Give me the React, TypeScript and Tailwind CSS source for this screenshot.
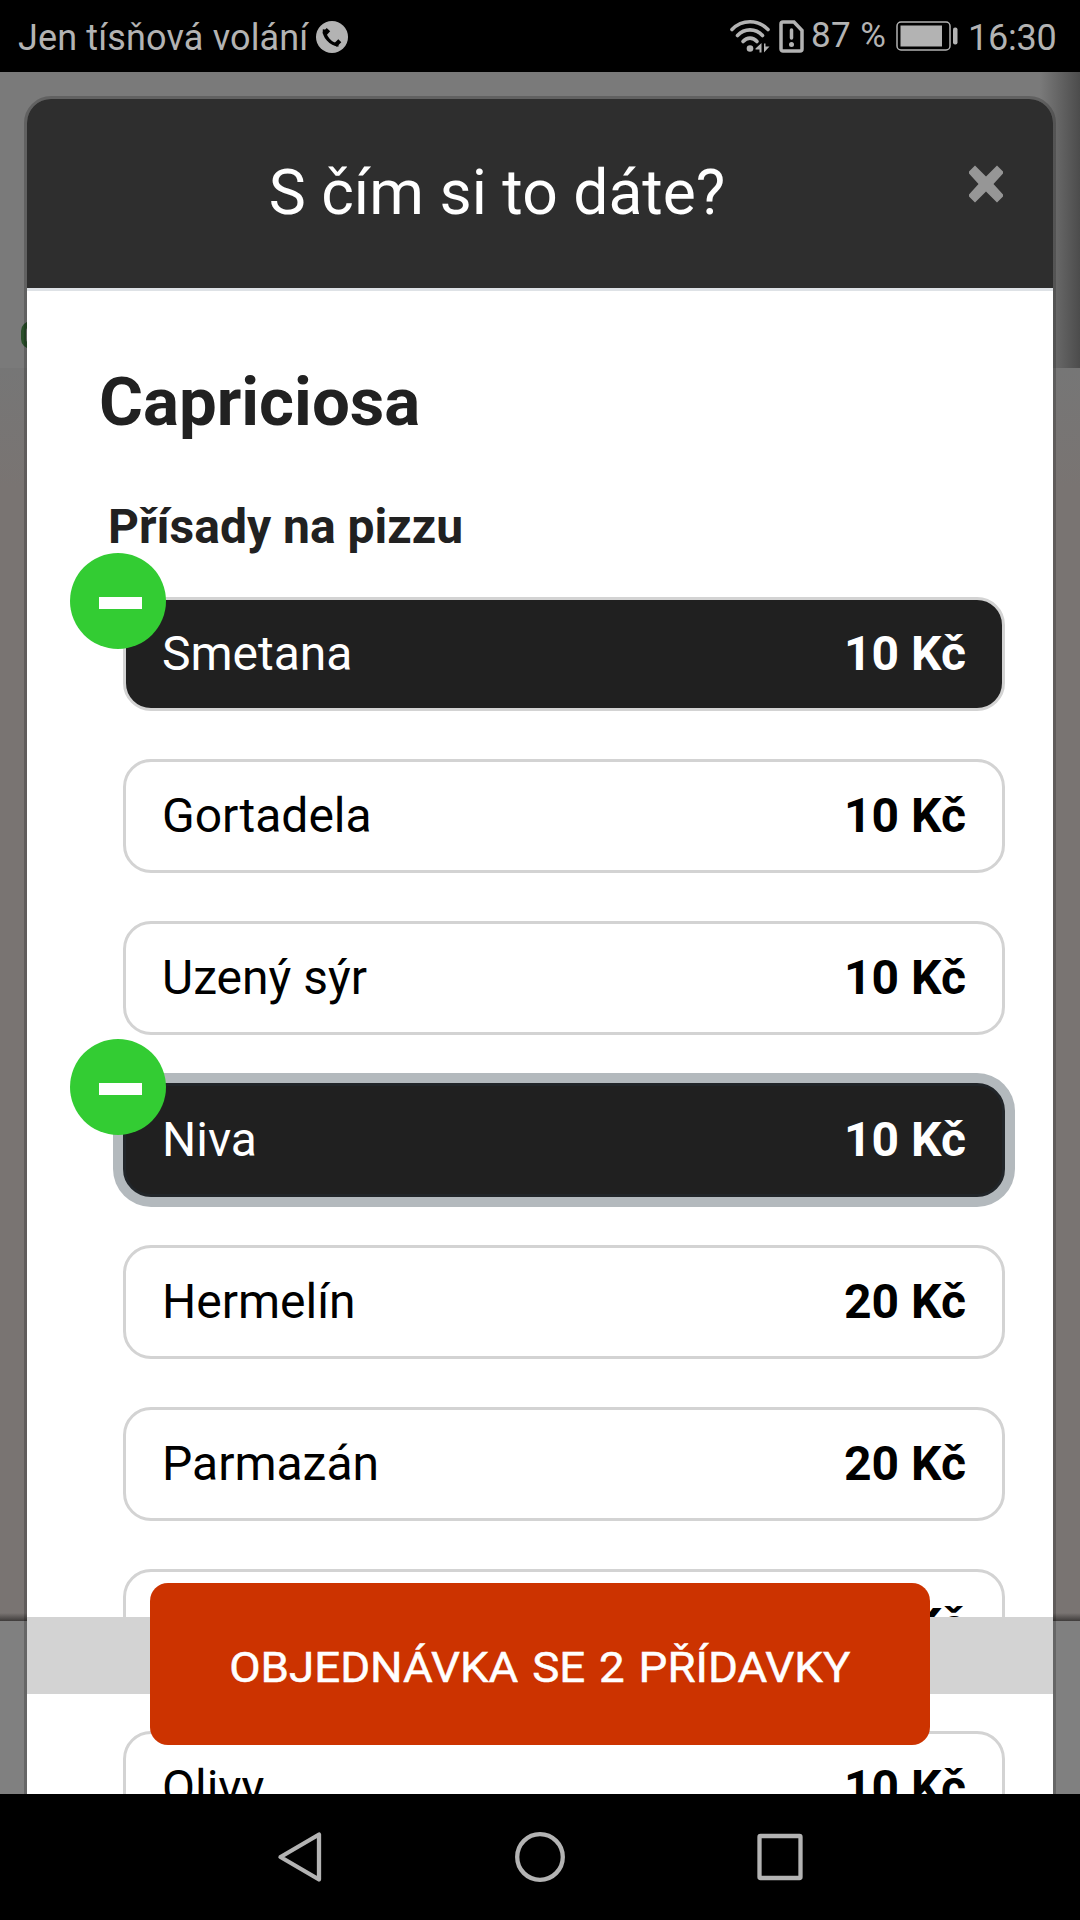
import { useState } from "react";
import clsx from "clsx";

type Topping = { id: number; name?: string; price: string };

const TOPPINGS: Topping[] = [
  { id: 1, name: "Smetana", price: "10 Kč" },
  { id: 2, name: "Gortadela", price: "10 Kč" },
  { id: 3, name: "Uzený sýr", price: "10 Kč" },
  { id: 4, name: "Niva", price: "10 Kč" },
  { id: 5, name: "Hermelín", price: "20 Kč" },
  { id: 6, name: "Parmazán", price: "20 Kč" },
  { id: 7, price: "10 Kč" },
  { id: 8, name: "Olivy", price: "10 Kč" },
];

const StatusBar = () => {
  return (
    <div className="flex h-[72px] shrink-0 items-center bg-black pr-[26px] pl-[18px] text-[#b3b3b3]">
      <span className="mt-[4px] w-[298px] text-[36px] leading-[72px] tracking-[0.15px] whitespace-nowrap">
        Jen tísňová volání
      </span>
      <svg className="mt-[1px] size-8" viewBox="0 0 32 32">
        <circle cx="16" cy="16" r="16" fill="#b3b3b3" />
        <path
          d="M8.5 8.5C7.5 15 14.5 23.5 22.5 24"
          fill="none"
          stroke="#000"
          strokeWidth="3.4"
        />
        <path
          d="M8.5 9.5l3.5 3.2M20 20.5l3 3"
          stroke="#000"
          strokeWidth="6.5"
        />
      </svg>
      <svg className="ml-auto h-[34px] w-10" viewBox="0 0 40 34">
        <g fill="none" stroke="#b3b3b3" strokeWidth="3.6" strokeLinecap="round">
          <path d="M2 10.5C12 .2 28 .2 38 10.5" />
          <path d="M7.5 16.5c7-7.5 18-7.5 25 0" />
          <path d="M13 22.5c4-4.5 10-4.5 14 0" />
        </g>
        <circle cx="20" cy="29.5" r="3.3" fill="#b3b3b3" />
        <path
          d="M25.5 29.5l6-5.5v9.5h-2v-3h-4zM34 24.5h1.5v3h4l-5.5 6z"
          fill="#b3b3b3"
        />
      </svg>
      <svg className="ml-[9px] h-[33px] w-[25px]" viewBox="0 0 25 33">
        <path
          d="M2 4a2 2 0 0 1 2-2h11l8 8.500V29a2 2 0 0 1-2 2H4a2 2 0 0 1-2-2z"
          fill="none"
          stroke="#b3b3b3"
          strokeWidth="3.5"
        />
        <path
          d="M12.5 10v8"
          stroke="#b3b3b3"
          strokeWidth="3.5"
          strokeLinecap="round"
        />
        <circle cx="12.5" cy="24.5" r="2.5" fill="#b3b3b3" />
      </svg>
      <span className="-mt-[1px] ml-[7px] w-[85px] text-[35px] leading-[72px] tracking-[0.4px] whitespace-nowrap">
        87 %
      </span>
      <svg className="h-[30px] w-[62px]" viewBox="0 0 62 30">
        <rect
          x="1"
          y="1"
          width="53"
          height="28"
          rx="4"
          fill="none"
          stroke="#b3b3b3"
          strokeWidth="1.5"
        />
        <rect x="4.5" y="4.5" width="41.5" height="21" fill="#b3b3b3" />
        <rect x="57" y="6.5" width="4.5" height="17" rx="2" fill="#b3b3b3" />
      </svg>
      <span className="mt-[4px] ml-[10px] w-[86px] text-[36px] leading-[72px] tracking-[-0.2px] whitespace-nowrap">
        16:30
      </span>
    </div>
  );
};

const NavBar = () => {
  return (
    <div className="flex h-[126px] shrink-0 items-center justify-center bg-black">
      <svg
        className="h-[60px] w-[540px]"
        viewBox="0 0 540 60"
        fill="none"
        stroke="#b3b3b3"
        strokeWidth="4.3"
        strokeLinejoin="round"
      >
        <path d="M49 7.5v45L10.5 30z" />
        <circle cx="270" cy="30" r="22.8" />
        <rect x="489.5" y="9" width="41" height="42" rx="1" />
      </svg>
    </div>
  );
};

// Dimmed page behind the dialog
const Backdrop = () => {
  return (
    <div className="absolute inset-0 flex flex-col bg-[#797472]">
      <div className="relative h-[296px] shrink-0 bg-[#7a7a7a]">
        <div className="absolute inset-y-0 right-0 w-10 bg-linear-to-r from-transparent to-[#4c4c4c]" />
        <div className="absolute top-[249px] left-[21px] h-[28px] w-5 rounded-full border-5 border-[#2a4f2a]" />
      </div>
      <div className="h-[120px] shrink-0 bg-linear-to-b from-[#767676] to-[#797472]" />
      <div className="flex-1" />
      <div className="h-2 shrink-0 bg-linear-to-b from-transparent to-[#3f3c3b]" />
      <div className="h-[173px] shrink-0 bg-[#808080]" />
    </div>
  );
};

type ToppingButtonProps = {
  topping: Topping;
  selected: boolean;
  focused: boolean;
  onClick: () => void;
};

const ToppingButton = ({
  topping,
  selected,
  focused,
  onClick,
}: ToppingButtonProps) => {
  return (
    <button
      type="button"
      onClick={onClick}
      className={clsx(
        "relative flex h-[114px] w-full shrink-0 items-center justify-between rounded-[28px] border-3 px-9 text-[48px] leading-[72px] outline-none",
        selected ? "bg-[#202020] text-white" : "bg-white text-black",
        focused
          ? "border-[#212529] ring-[10px] ring-[#b3b9bd]"
          : "border-[#d3d3d3]",
      )}
    >
      <span>{topping.name}</span>
      <span className="font-bold">{topping.price}</span>
      {selected && (
        <span className="absolute -top-[47px] -left-[56px] flex size-24 items-center justify-center rounded-full bg-[#33cc33]">
          <span className="mt-[4px] ml-[5px] h-3 w-[43px] bg-white" />
        </span>
      )}
    </button>
  );
};

export default function App() {
  const [selected, setSelected] = useState<number[]>([1, 4]);
  const [focused, setFocused] = useState(4);

  const toggle = (id: number) => {
    setFocused(id);
    setSelected((prev) =>
      prev.includes(id) ? prev.filter((x) => x !== id) : [...prev, id],
    );
  };

  return (
    <div className="flex h-[1920px] w-[1080px] flex-col overflow-hidden font-[Roboto,sans-serif]">
      <StatusBar />
      <div className="relative min-h-0 flex-1 overflow-hidden">
        <Backdrop />
        <div className="relative px-6 pt-6">
          <div className="flex h-[1800px] flex-col overflow-hidden rounded-[27px] border-3 border-black/20 bg-clip-padding">
            <div className="flex h-48 shrink-0 items-center border-b-3 border-[#dee2e6] bg-[#2e2e2e] pr-[50px] pl-12">
              <h5 className="-mt-[2px] flex-1 text-center text-[62.4px] leading-[94px] text-white">
                S čím si to dáte?
              </h5>
              <button
                type="button"
                className="mb-[20px] ml-[50px]"
                aria-label="Zavřít"
              >
                <svg className="h-[38px] w-[34px]" viewBox="0 0 34 38">
                  <path
                    d="M6 .5l11 11L28 .5l6 6v2L24.500 19 34 29.500v2L28 37.500 17 26.500 6 37.500 0 31.500v-2L9.500 19 0 8.500v-2z"
                    fill="#969696"
                  />
                </svg>
              </button>
            </div>
            <div className="flex flex-1 flex-col bg-white pt-[72px] pr-12 pl-[72px]">
              <h3 className="text-[67.2px] leading-[79px] font-bold text-[#212121]">
                Capriciosa
              </h3>
              <p className="mt-[49px] pl-[9px] text-[48px] leading-[72px] font-bold text-[#212121]">
                Přísady na pizzu
              </p>
              <div className="mt-[34px] flex flex-col gap-12 pl-6">
                {TOPPINGS.map((item) => (
                  <ToppingButton
                    key={item.id}
                    topping={item}
                    selected={selected.includes(item.id)}
                    focused={focused === item.id}
                    onClick={() => toggle(item.id)}
                  />
                ))}
              </div>
            </div>
          </div>
        </div>
        <div className="absolute inset-x-[27px] bottom-[100px] flex h-[77px] items-center justify-center bg-[#d3d3d3]">
          <button
            type="button"
            className="mt-[17px] h-[162px] w-[780px] shrink-0 rounded-[18px] bg-[#cc3300] pt-[6px] text-[42px] leading-[63px] text-white uppercase"
          >
            <span className="inline-block scale-x-[1.087] [word-spacing:2.3px] [-webkit-text-stroke:0.5px_white]">
              Objednávka se {selected.length} přídavky
            </span>
          </button>
        </div>
      </div>
      <NavBar />
    </div>
  );
}
